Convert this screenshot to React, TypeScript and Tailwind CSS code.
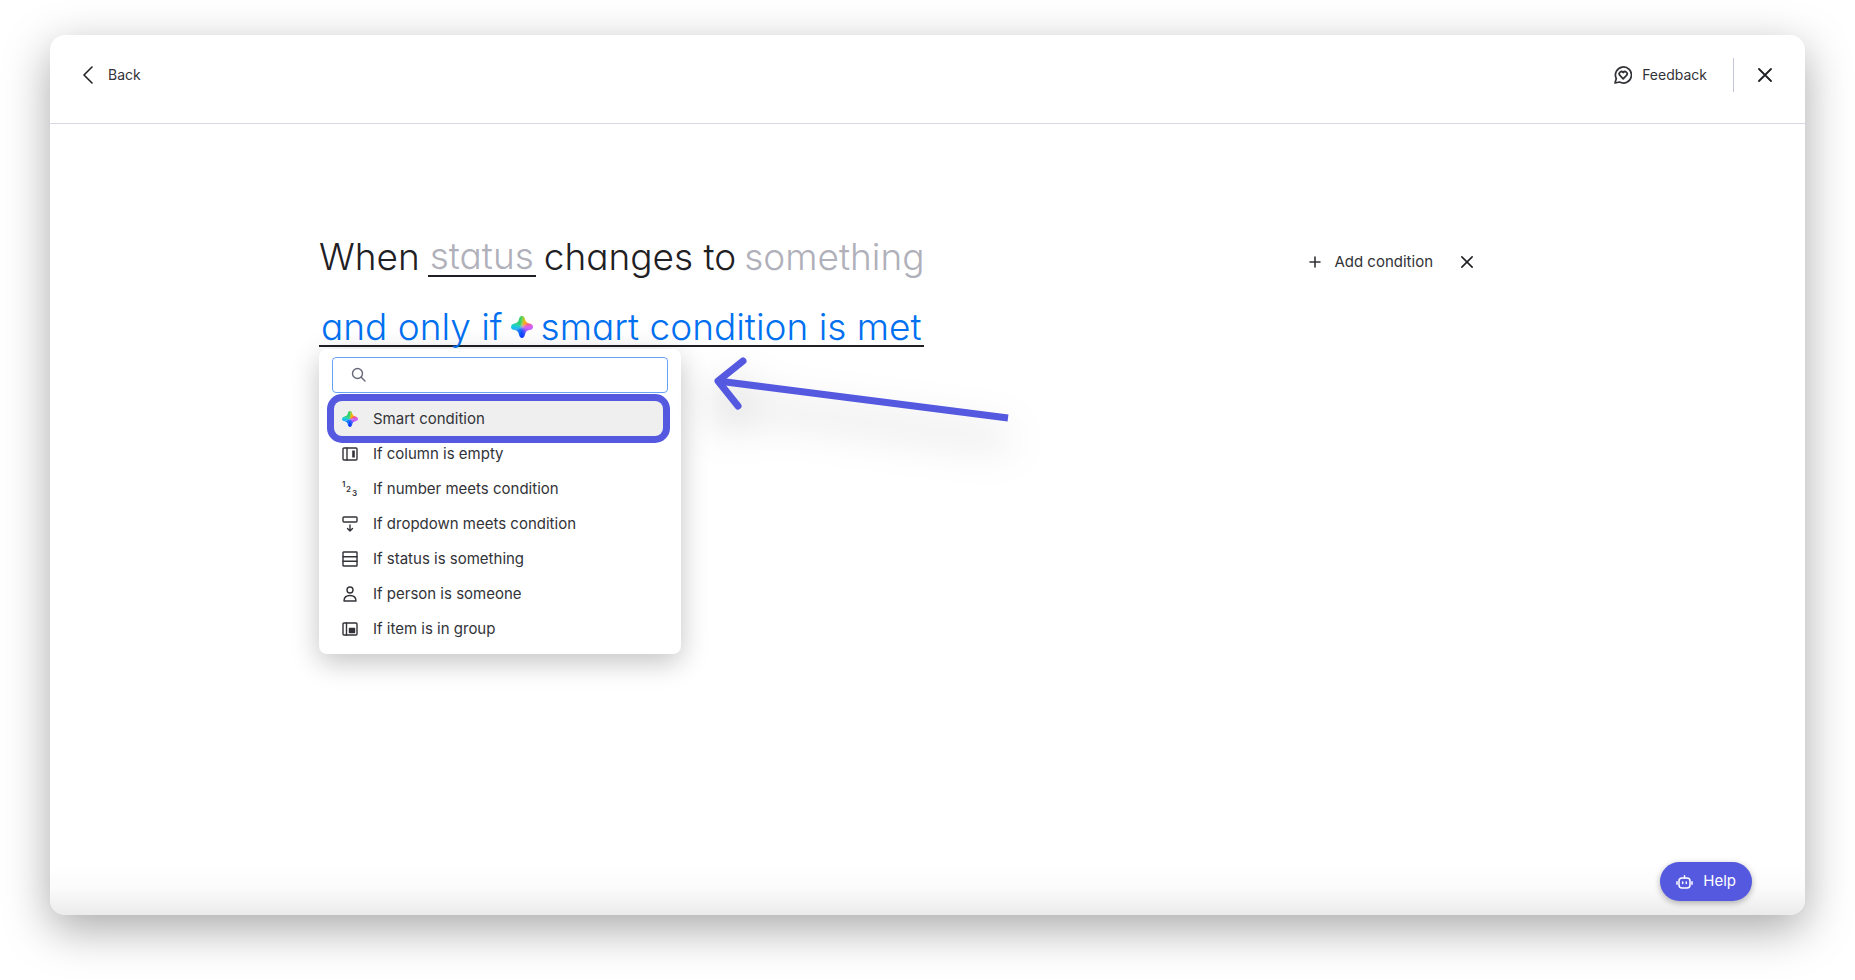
import React, { useState } from "react";

const SparkleIcon: React.FC<{ id: string; className?: string }> = ({ id, className }) => (
    <svg viewBox="0 0 22 22" className={className} aria-hidden="true">
        <defs>
            <clipPath id={`${id}-clip`}>
                <path d="M11 0c1.600 0 2.600 1.200 3 3 .6 2.800 1.600 3.800 4.600 4.600C20.800 8.200 22 9.300 22 11s-1.200 2.600-3.400 3.100c-3 .7-4 1.800-4.600 4.600-.4 1.900-1.400 3.300-3 3.300s-2.600-1.400-3-3.300c-.6-2.800-1.600-3.900-4.600-4.600C1.200 13.600 0 12.700 0 11s1.200-2.800 3.400-3.400C6.400 6.800 7.400 5.800 8 3c.4-1.800 1.400-3 3-3z" />
            </clipPath>
            <filter id={`${id}-soft`} x="-20%" y="-20%" width="140%" height="140%">
                <feGaussianBlur stdDeviation="0.8" />
            </filter>
        </defs>
        <g clipPath={`url(#${id}-clip)`}>
            <g filter={`url(#${id}-soft)`}>
                <path d="M11 11 7-3h5z" fill="#3ecf4a" />
                <path d="M11 11 12-3h7z" fill="#7ccf3a" />
                <path d="M11 11 14 0l6 5z" fill="#ffb000" />
                <path d="M11 11 20 4l5 5z" fill="#ff5a5a" />
                <path d="M11 11 25 7v7z" fill="#d45cf5" />
                <path d="M11 11 25 14l-8 6z" fill="#b05cff" />
                <path d="M11 11 18 19l-5 6z" fill="#3d5cff" />
                <path d="M11 11 14 25H6z" fill="#0a3cff" />
                <path d="M11 11 7 25-1 17z" fill="#1477f5" />
                <path d="M11 11-3 17V10z" fill="#18b8f0" />
                <path d="M11 11-3 11V5z" fill="#1fd0d0" />
                <path d="M11 11-2 6l10-10z" fill="#2fd07a" />
            </g>
        </g>
    </svg>
);

const IconFrame: React.FC<{ children: React.ReactNode }> = ({ children }) => (
    <svg
        width="16"
        height="16"
        viewBox="0 0 16 16"
        fill="none"
        stroke="currentColor"
        strokeWidth="1.4"
        strokeLinejoin="round"
        strokeLinecap="round"
        className="shrink-0"
        aria-hidden="true"
    >
        {children}
    </svg>
);

const CloseIcon: React.FC<{ className?: string }> = ({ className }) => (
    <svg viewBox="0 0 14 14" fill="none" stroke="currentColor" strokeWidth="1.8" strokeLinecap="round" className={className} aria-hidden="true">
        <path d="M1 1l12 12M13 1 1 13" />
    </svg>
);

const conditions = [
    {
        label: "Smart condition",
        icon: <SparkleIcon id="option" className="size-4 shrink-0" />,
    },
    {
        label: "If column is empty",
        icon: (
            <IconFrame>
                <rect x="1" y="2" width="14" height="12" rx="1" />
                <path d="M5 2v12" />
                <path d="M11.500 4.500v7" strokeWidth="2.600" strokeLinecap="butt" />
            </IconFrame>
        ),
    },
    {
        label: "If number meets condition",
        icon: (
            <svg width="16" height="16" viewBox="0 0 16 16" fill="currentColor" className="shrink-0 overflow-visible font-['Inter',sans-serif] text-[8px] font-semibold" aria-hidden="true">
                <text x="0" y="6">1</text>
                <text x="4" y="11">2</text>
                <text x="10" y="15">3</text>
            </svg>
        ),
    },
    {
        label: "If dropdown meets condition",
        icon: (
            <IconFrame>
                <rect x="1" y="1" width="14" height="5" rx="1" />
                <path d="M8 9v6M5.500 12.500 8 15l2.500-2.500" />
            </IconFrame>
        ),
    },
    {
        label: "If status is something",
        icon: (
            <IconFrame>
                <rect x="1" y="1" width="14" height="14" rx="0.500" />
                <path d="M1 5.700h14M1 10.300h14" />
            </IconFrame>
        ),
    },
    {
        label: "If person is someone",
        icon: (
            <IconFrame>
                <circle cx="8" cy="4" r="3" />
                <path d="M2 15c0-3.500 2.500-5.500 6-5.500s6 2 6 5.500z" />
            </IconFrame>
        ),
    },
    {
        label: "If item is in group",
        icon: (
            <IconFrame>
                <rect x="1" y="2" width="14" height="12" rx="1" />
                <path d="M4.500 2v12" />
                <rect x="7.500" y="7.500" width="5" height="4" fill="currentColor" />
            </IconFrame>
        ),
    },
];

const ConditionMenu: React.FC = () => {
    const [query, setQuery] = useState("");
    const [selected, setSelected] = useState("Smart condition");

    return (
        <div className="absolute top-full left-0 mt-[2px] w-[362px] rounded-lg bg-white py-2 text-[15px] leading-5 font-normal text-[#323338] shadow-[0_8px_28px_rgba(0,0,0,0.24)]">
            <label className="mr-[13px] ml-[13px] flex h-9 items-center rounded border border-[#66a3f5] pl-[18px]">
                <svg width="16" height="16" viewBox="0 0 16 16" fill="none" stroke="#676879" strokeWidth="1.4" strokeLinecap="round" aria-hidden="true">
                    <circle cx="6.500" cy="6.500" r="5" />
                    <path d="M10.200 10.200 14 14" />
                </svg>
                <input
                    type="text"
                    aria-label="Search conditions"
                    className="ml-3 min-w-0 flex-1 bg-transparent outline-none"
                    value={query}
                    onChange={(e) => setQuery(e.target.value)}
                />
            </label>
            <ul className="mt-2 mr-[18px] ml-[15px]">
                {conditions.map((condition) => (
                    <li key={condition.label}>
                        <button
                            type="button"
                            onClick={() => setSelected(condition.label)}
                            className={
                                condition.label === selected
                                    ? "flex h-[35px] w-full items-center gap-[15px] rounded-lg bg-[#efefef] pl-2 ring-[7px] ring-[#5559df]"
                                    : "flex h-[35px] w-full items-center gap-[15px] rounded-lg pl-2"
                            }
                        >
                            {condition.icon}
                            {condition.label}
                        </button>
                    </li>
                ))}
            </ul>
        </div>
    );
};

const PointerArrow: React.FC = () => (
    <svg
        width="320"
        height="140"
        viewBox="0 0 320 140"
        fill="none"
        stroke="#5559df"
        strokeWidth="7"
        className="pointer-events-none absolute top-full left-[386px] overflow-visible drop-shadow-[0_22px_20px_rgba(0,0,0,0.28)]"
        aria-hidden="true"
    >
        <path d="M13 34 303 71" />
        <path d="M38 14 13 34l20 25" strokeLinecap="round" strokeLinejoin="round" />
    </svg>
);

const App: React.FC = () => {
    return (
        <div className="flex min-h-screen flex-col bg-white px-[50px] pt-[35px] pb-[65px] font-['Inter','Noto_Sans',sans-serif] text-[15px] text-[#323338]">
            <main className="flex flex-1 flex-col rounded-[15px] bg-white shadow-[0_14px_46px_rgba(0,0,0,0.34)]">
                <header className="flex items-center justify-between border-b border-[#d9d9e3] pt-[23px] pr-[33px] pb-[31px] pl-[33px] text-sm">
                    <button type="button" className="flex items-center gap-[15px]">
                        <svg width="10" height="18" viewBox="0 0 10 18" fill="none" stroke="#1f2024" strokeWidth="1.6" strokeLinecap="round" strokeLinejoin="round" aria-hidden="true">
                            <path d="M9 1 1 9l8 8" />
                        </svg>
                        Back
                    </button>
                    <div className="flex items-center">
                        <button type="button" className="flex items-center gap-[10px]">
                            <svg width="18" height="18" viewBox="0 0 18 18" fill="none" stroke="currentColor" strokeWidth="1.7" strokeLinecap="round" strokeLinejoin="round" aria-hidden="true">
                                <path d="M2.300 12.600A8 8 0 1 1 5.600 16L1 17z" />
                                <path d="M9.200 12.800 5.700 9.200a2.200 2.200 0 0 1 3.500-2.700 2.200 2.200 0 0 1 3.500 2.700z" />
                            </svg>
                            Feedback
                        </button>
                        <span className="ml-[26px] h-[34px] w-px bg-[#c3c6d4]" />
                        <button type="button" aria-label="Close" className="ml-6 text-[#1f2024]">
                            <CloseIcon className="size-[14px]" />
                        </button>
                    </div>
                </header>

                <section className="mx-auto flex w-full max-w-[1217px] items-start justify-between pt-[97px]">
                    <div className="text-[37px] leading-[38px] font-light text-[#1f2024]">
                        <p className="flex gap-2 [font-feature-settings:'cv11']">
                            <span className="pt-[17px]">When</span>
                            <button type="button" className="h-[56px] border-b-2 border-[#1f2024] px-[2px] pt-4 text-[#b0b0ba]">
                                status
                            </button>
                            <span className="pt-[17px]">changes to</span>
                            <span className="pt-[17px] text-[#b0b0ba]">something</span>
                        </p>
                        <div className="relative mt-[14px] w-fit">
                            <button type="button" className="flex h-[56px] items-center gap-2 border-b-2 border-[#1f2024] px-[2px] pt-[18px] text-[#0070f0] [font-feature-settings:'cv11']">
                                and only if
                                <SparkleIcon id="headline" className="size-[22px]" />
                                smart condition is met
                            </button>
                            <ConditionMenu />
                            <PointerArrow />
                        </div>
                    </div>
                    <div className="mr-[63px] flex items-center pt-[30px]">
                        <button type="button" className="flex items-center gap-[13px]">
                            <svg width="12" height="12" viewBox="0 0 12 12" fill="none" stroke="currentColor" strokeWidth="1.6" strokeLinecap="round" aria-hidden="true">
                                <path d="M6 1v10M1 6h10" />
                            </svg>
                            Add condition
                        </button>
                        <button type="button" aria-label="Remove condition" className="ml-7 text-[#1f2024]">
                            <CloseIcon className="size-3" />
                        </button>
                    </div>
                </section>

                <div className="mt-auto flex justify-end rounded-b-[15px] bg-linear-to-b from-white via-[#fbfbfb] to-[#ebebeb] pr-[53px] pb-[14px]">
                    <button type="button" className="flex h-[39px] items-center gap-[10px] rounded-full bg-[#5559df] px-4 text-white shadow-[0_2px_6px_rgba(0,0,0,0.3)]">
                        <svg width="17" height="14" viewBox="0 0 17 14" fill="none" stroke="currentColor" strokeWidth="1.5" strokeLinecap="round" aria-hidden="true">
                            <rect x="3" y="3" width="11" height="10" rx="3" />
                            <path d="M8.500 3V.8M1 6.800v2.400M16 6.800v2.400M6.700 7v1.600M10.300 7v1.600" />
                        </svg>
                        Help
                    </button>
                </div>
            </main>
        </div>
    );
};

export default App;
